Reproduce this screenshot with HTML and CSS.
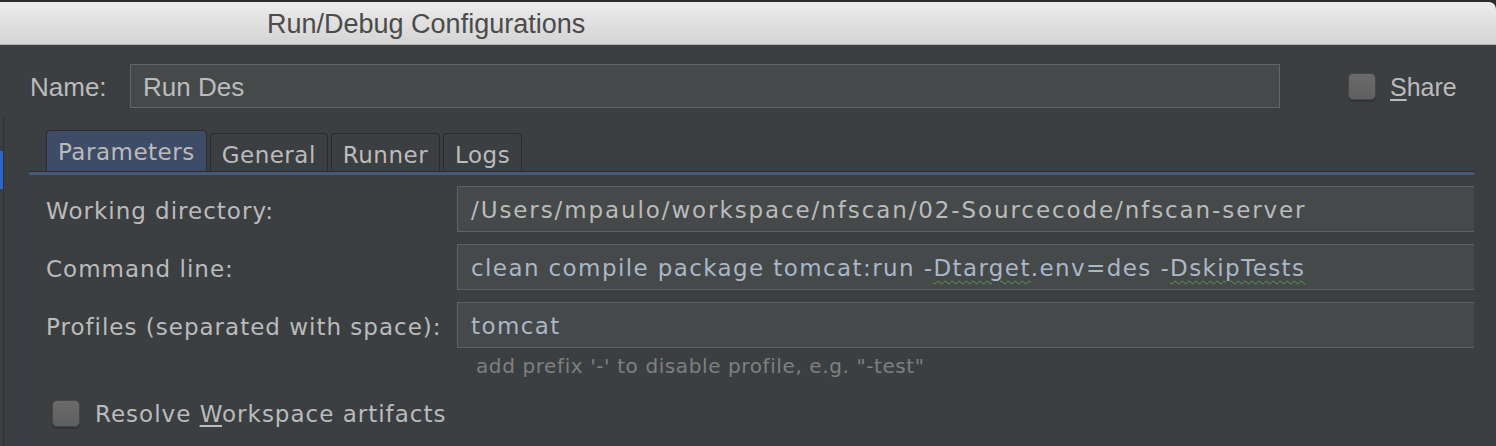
FILE: index.html
```html
<!DOCTYPE html>
<html>
<head>
<meta charset="utf-8">
<link rel="stylesheet" href="styles.css">
</head>
<body>
<div class="window">
  <div class="titlebar"><span class="title">Run/Debug Configurations</span></div>
  <div class="namerow">
    <span class="name-label">Name:</span>
    <div class="name-input">Run Des</div>
    <div class="share"><span class="checkbox"></span><span class="share-text"><u>S</u>hare</span></div>
  </div>
  <div class="main">
    <div class="sidebar"><div class="sel"></div></div>
    <div class="editor">
      <div class="tabs">
        <div class="tab active">Parameters</div>
        <div class="tab">General</div>
        <div class="tab">Runner</div>
        <div class="tab">Logs</div>
      </div>
      <div class="panel">
        <div class="band"></div>
        <div class="content">
          <div class="form">
            <div class="label">Working directory:</div>
            <div class="field path">/Users/mpaulo/workspace/nfscan/02-Sourcecode/nfscan-server</div>
            <div class="label">Command line:</div>
            <div class="field code">clean compile package tomcat:run -<span class="typo">Dtarget</span>.env=des -<span class="typo">DskipTests</span></div>
            <div class="label">Profiles (separated with space):</div>
            <div class="field code">tomcat</div>
            <div class="spacer"></div>
            <div class="hint">add prefix '-' to disable profile, e.g. "-test"</div>
          </div>
          <div class="check-row"><span class="checkbox"></span><span class="check-text">Resolve <u>W</u>orkspace artifacts</span></div>
        </div>
      </div>
    </div>
  </div>
</div>
</body>
</html>
```
FILE: styles.css
```css
html, body {
  margin: 0;
  padding: 0;
  background: #2b2b2b;
}
.window {
  width: 1496px;
  height: 446px;
  overflow: hidden;
  padding-top: 2px;
  box-sizing: border-box;
  background: #2b2b2b;
}
.titlebar {
  height: 42px;
  background: linear-gradient(#ececec, #d4d4d4);
  border-bottom: 1px solid #b2b2b2;
  border-top-right-radius: 7px;
  display: flex;
  align-items: center;
  padding-left: 267px;
}
.title {
  font-family: "Liberation Sans", Arial, sans-serif;
  font-size: 27px;
  color: #4b4b4b;
  padding-top: 3px;
}
.namerow {
  background: #3c3f41;
  height: 67px;
  box-sizing: border-box;
  padding: 19px 0 0 30px;
  display: flex;
  align-items: flex-start;
  font-family: "Liberation Sans", Arial, sans-serif;
  color: #bbbbbb;
  font-size: 26px;
}
.name-label {
  height: 44px;
  line-height: 46px;
  width: 100px;
}
.name-input {
  width: 1150px;
  height: 44px;
  box-sizing: border-box;
  background: #45494a;
  border: 1px solid #646464;
  line-height: 45px;
  padding-left: 12px;
}
.share {
  display: flex;
  align-items: center;
  height: 44px;
  margin-left: 68px;
  gap: 14px;
}
.share-text {
  font-size: 25px;
  padding-top: 3px;
}
.share-text u, .check-text u {
  text-decoration-thickness: 2px;
  text-underline-offset: 3px;
}
.checkbox {
  width: 28px;
  height: 27px;
  box-sizing: border-box;
  border-radius: 5px;
  background: linear-gradient(#6b6b6b, #5f5f5f);
  border: 1px solid #474747;
  box-shadow: 0 2px 0 #303234;
  flex: none;
}
.main {
  background: #3c3f41;
  display: flex;
  height: 400px;
}
.sidebar {
  width: 3px;
  border-right: 1px solid #303234;
  margin-top: 4px;
}
.sel {
  margin-top: 35px;
  height: 38px;
  width: 3px;
  background: #2f65ca;
}
.editor {
  flex: 1;
  margin-left: 24px;
  margin-right: 22px;
  display: flex;
  flex-direction: column;
  font-family: "DejaVu Sans", Verdana, sans-serif;
  color: #bbbbbb;
  font-size: 23px;
}
.tabs {
  display: flex;
  align-items: flex-end;
  gap: 3px;
  padding-left: 18px;
  height: 59px;
  box-sizing: border-box;
  letter-spacing: 0.5px;
}
.tab {
  height: 38px;
  box-sizing: border-box;
  border: 1px solid #2b2b2b;
  border-bottom: none;
  border-radius: 4px 4px 0 0;
  padding: 0 11px;
  line-height: 42px;
  background: #3c3f41;
}
.tab.active {
  height: 41px;
  background: #3e4c67;
  line-height: 42px;
  padding: 0 11px;
}
.panel {
  flex: 1;
  border-top: 1px solid #2b2b2b;
  border-left: 1px solid #344055;
  overflow: hidden;
}
.band {
  height: 3px;
  background: #475879;
}
.content {
  padding: 11px 0 0 17px;
}
.form {
  display: grid;
  grid-template-columns: 411px 1fr;
  row-gap: 12px;
  align-items: center;
}
.label {
  letter-spacing: 1px;
  padding-top: 3px;
}
.field {
  height: 46px;
  box-sizing: border-box;
  background: #45494a;
  border: 1px solid #5f6161;
  border-right: none;
  padding-left: 13px;
  line-height: 47px;
  white-space: nowrap;
}
.path { color: #bbbbbb; letter-spacing: 1.9px; }
.code { color: #a9b7c6; letter-spacing: 1.4px; }
.typo {
  text-decoration: underline wavy #5f9a4d;
  text-decoration-thickness: 1px;
  text-underline-offset: 4px;
}
.hint {
  margin-top: -6px;
  padding-left: 19px;
  font-size: 20px;
  letter-spacing: 0.6px;
  color: #7f7f7f;
  line-height: 24px;
}
.check-row {
  display: flex;
  align-items: center;
  gap: 15px;
  margin-top: 21px;
  padding-left: 6px;
}
.check-text {
  letter-spacing: 1px;
  padding-top: 2px;
}
```
